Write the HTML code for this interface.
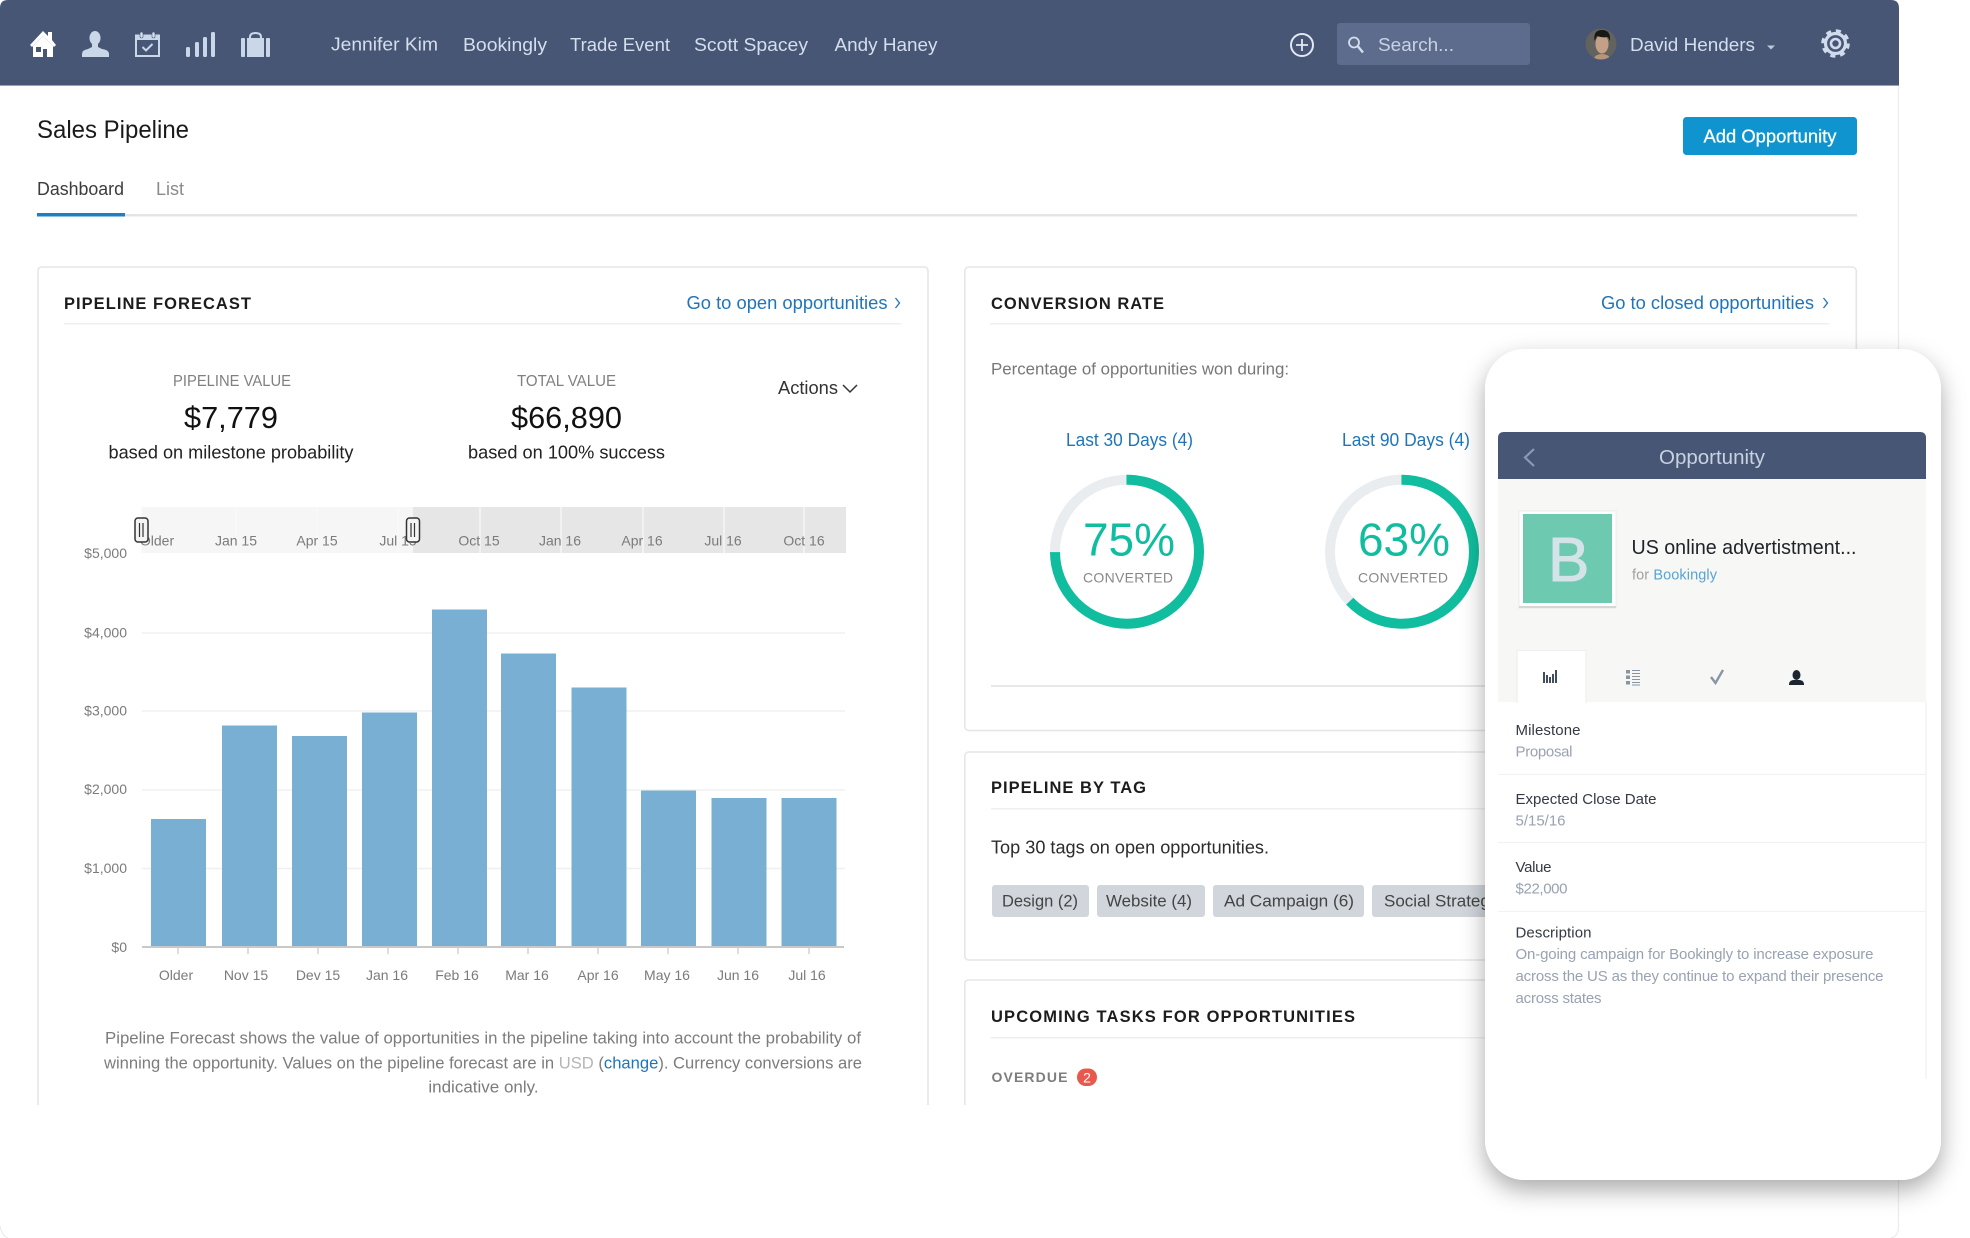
<!DOCTYPE html>
<html lang="en"><head><meta charset="utf-8"><title>Sales Pipeline</title>
<style>
html,body{margin:0;padding:0;background:#fff;width:1970px;height:1238px;overflow:hidden}
svg{display:block;filter:blur(.3px)}
text{font-family:"Liberation Sans",Arial,sans-serif}
.nav{font-size:18px;fill:#d5deec}
.h{font-size:16.500px;font-weight:700;fill:#1c1c1c}
.lnk{font-size:18px;fill:#1f75b9}
.ax{font-size:14px;fill:#7b7b7b}
.rg{font-size:14px;fill:#7b7b7b;text-anchor:middle}
.d{font-size:17px;fill:#7c7c7c}
.lab{font-size:15px;fill:#333a44}
.val{font-size:15px;fill:#98a2b0}
.tag{font-size:17px;fill:#444}
</style></head><body>
<svg width="1970" height="1238" viewBox="0 0 1970 1238" xmlns="http://www.w3.org/2000/svg">
<defs>
<filter id="sh" x="-15%" y="-10%" width="130%" height="125%">
<feDropShadow dx="0" dy="10" stdDeviation="12" flood-color="#000" flood-opacity=".33"/>
</filter>
<clipPath id="av"><circle cx="1601" cy="44" r="15.500"/></clipPath>
</defs>

<!-- page frame -->
<path d="M1898.500 85V1226q0 11-8 12M0 1226q2 10 8 12" fill="none" stroke="#ececec" stroke-width="1.200"/>

<!-- top bar -->
<path d="M8 0H1891q8 0 8 8V85H0V8q0-8 8-8Z" fill="#475675"/>
<rect x="0" y="85" width="1899" height="1" fill="#98a3bb"/>

<!-- home -->
<path d="M30 45 43 31l5 5v-4h4v8l4 5-2 2-11-11-11 11Z" fill="#fff"/>
<path d="M33 46 43 36l10 10v11H47V49h-4v8H33Zm3 1v5h5v-5Z" fill="#fff" fill-rule="evenodd"/>
<!-- person -->
<ellipse cx="95" cy="38" rx="5.500" ry="7" fill="#c9d7e9"/>
<path d="M82 57v-3q0-4 6-5l4-2v-3h6v3l4 2q7 1 7 5v3Z" fill="#c9d7e9"/>
<!-- calendar -->
<rect x="136" y="35.500" width="23" height="20.500" fill="none" stroke="#c9d7e9" stroke-width="2"/>
<rect x="136" y="35" width="23" height="5" fill="#c9d7e9"/>
<rect x="140" y="32" width="3" height="6" rx="1.500" fill="#d8e2f0" stroke="#475675" stroke-width=".6"/>
<rect x="152" y="32" width="3" height="6" rx="1.500" fill="#d8e2f0" stroke="#475675" stroke-width=".6"/>
<path d="M142.500 47l3.500 3.500 6.500-6.500" fill="none" stroke="#c9d7e9" stroke-width="2"/>
<!-- bars -->
<g fill="#c9d7e9"><rect x="186" y="47" width="4" height="10" rx="1.500"/><rect x="195" y="42" width="4" height="15" rx="1.500"/><rect x="203" y="37" width="4" height="20" rx="1.500"/><rect x="211" y="32" width="4" height="25" rx="1.500"/></g>
<!-- briefcase -->
<g fill="#c9d7e9"><rect x="241" y="38" width="4" height="19" rx="1"/><rect x="247" y="38" width="17" height="19"/><rect x="266" y="38" width="4" height="19" rx="1"/></g>
<path d="M250 38v-1q0-4 5.500-4t5.500 4v1" fill="none" stroke="#c9d7e9" stroke-width="2"/>

<g class="nav">
<text x="331" y="50.500" textLength="107" lengthAdjust="spacingAndGlyphs">Jennifer Kim</text>
<text x="463" y="51" textLength="84" lengthAdjust="spacingAndGlyphs">Bookingly</text>
<text x="570" y="51" textLength="100" lengthAdjust="spacingAndGlyphs">Trade Event</text>
<text x="694" y="51" textLength="114" lengthAdjust="spacingAndGlyphs">Scott Spacey</text>
<text x="834.500" y="51" textLength="103" lengthAdjust="spacingAndGlyphs">Andy Haney</text>
</g>

<!-- plus -->
<circle cx="1302" cy="45" r="11" fill="none" stroke="#e3e9f2" stroke-width="2"/>
<path d="M1302 39v12M1296 45h12" stroke="#e3e9f2" stroke-width="1.800"/>
<!-- search -->
<rect x="1337" y="23" width="193" height="42" rx="3" fill="#5d6c8d"/>
<circle cx="1354" cy="42.500" r="5" fill="none" stroke="#d5deec" stroke-width="1.800"/>
<path d="M1358 46.500l5 6" stroke="#d5deec" stroke-width="2.400"/>
<text x="1378" y="51" textLength="76" lengthAdjust="spacingAndGlyphs" class="nav" fill-opacity=".9">Search...</text>
<!-- avatar -->
<g clip-path="url(#av)">
<rect x="1585" y="28" width="32" height="32" fill="#62625e"/>
<ellipse cx="1602" cy="44" rx="6.500" ry="9.500" fill="#c4a088"/>
<path d="M1594.500 41q-1.500-11 7.500-11t8 11l-2-4q-6 1-11-1Z" fill="#1a1817"/>
<path d="M1593 60q2-6 9-6t9 6Z" fill="#b89478"/>
</g>
<text x="1630" y="51" textLength="125" lengthAdjust="spacingAndGlyphs" class="nav">David Henders</text>
<path d="M1767 45.500h8l-4 4Z" fill="#bcc7d9"/>
<!-- gear -->
<circle cx="1835.500" cy="43.500" r="10" fill="none" stroke="#d0dcec" stroke-width="3.200"/>
<circle cx="1835.500" cy="43.500" r="12.500" fill="none" stroke="#d0dcec" stroke-width="3.600" stroke-dasharray="5 4.817"/>
<circle cx="1835.500" cy="43.500" r="4.500" fill="none" stroke="#d0dcec" stroke-width="2.600"/>

<!-- page title -->
<text x="37" y="138" font-size="25" fill="#1a1a1a" textLength="152" lengthAdjust="spacingAndGlyphs">Sales Pipeline</text>
<text x="37" y="195" font-size="18" fill="#3c3c3c" textLength="87" lengthAdjust="spacingAndGlyphs">Dashboard</text>
<text x="156" y="195" font-size="18" fill="#8a8a8a" textLength="28" lengthAdjust="spacingAndGlyphs">List</text>
<rect x="37" y="214" width="1820" height="2.500" fill="#e4e4e4"/>
<rect x="37" y="213" width="88" height="3.500" fill="#2080bf"/>
<rect x="1683" y="117" width="174" height="38" rx="3.500" fill="#0f94cf"/>
<text x="1703.500" y="142.500" font-size="18" fill="#fff" textLength="133" lengthAdjust="spacingAndGlyphs" stroke="#fff" stroke-width=".25">Add Opportunity</text>

<!-- LEFT CARD -->
<path d="M38 1105V271q0-4 4-4H924q4 0 4 4V1105" fill="none" stroke="#e6e6e6" stroke-width="1.600"/>
<text x="64" y="309" class="h" textLength="187">PIPELINE FORECAST</text>
<text x="686.500" y="309" class="lnk" textLength="201" lengthAdjust="spacingAndGlyphs">Go to open opportunities</text>
<path d="M895.500 298l4 5-4 5" fill="none" stroke="#1f75b9" stroke-width="1.300"/>
<rect x="64" y="323" width="837" height="1.500" fill="#efefef"/>

<text x="173" y="386" font-size="15.500" fill="#808080" textLength="118" lengthAdjust="spacingAndGlyphs">PIPELINE VALUE</text>
<text x="184" y="428" font-size="31" fill="#111" textLength="94" lengthAdjust="spacingAndGlyphs">$7,779</text>
<text x="108.500" y="458.500" font-size="18" fill="#222" textLength="245" lengthAdjust="spacingAndGlyphs">based on milestone probability</text>
<text x="517" y="386" font-size="15.500" fill="#808080" textLength="99" lengthAdjust="spacingAndGlyphs">TOTAL VALUE</text>
<text x="511" y="428" font-size="31" fill="#111" textLength="111" lengthAdjust="spacingAndGlyphs">$66,890</text>
<text x="468" y="458.500" font-size="18" fill="#222" textLength="197" lengthAdjust="spacingAndGlyphs">based on 100% success</text>
<text x="778" y="394" font-size="18" fill="#333" textLength="60" lengthAdjust="spacingAndGlyphs">Actions</text>
<path d="M843 385l7 7 7-7" fill="none" stroke="#333" stroke-width="1.500"/>

<!-- range -->
<rect x="141.500" y="507" width="272" height="46" fill="#f6f6f6"/>
<rect x="413" y="507" width="433" height="46" fill="#e6e6e6"/>
<path d="M236 507v46M317 507v46M398 507v46" stroke="#fbfbfb" stroke-width="1"/>
<path d="M480 507v46M561 507v46M643 507v46M724 507v46M804 507v46" stroke="#f6f6f6" stroke-width="1.500"/>
<g>
<text x="157" y="545.500" class="rg">Older</text><text x="236" y="545.500" class="rg">Jan 15</text><text x="317" y="545.500" class="rg">Apr 15</text><text x="398" y="545.500" class="rg">Jul 15</text><text x="479" y="545.500" class="rg">Oct 15</text><text x="560" y="545.500" class="rg">Jan 16</text><text x="642" y="545.500" class="rg">Apr 16</text><text x="723" y="545.500" class="rg">Jul 16</text><text x="804" y="545.500" class="rg">Oct 16</text>
</g>
<g fill="#f4f4f4" stroke="#333" stroke-width="1.500">
<rect x="135" y="518" width="13" height="24" rx="3"/><rect x="406.500" y="518" width="13" height="24" rx="3"/>
</g>
<path d="M139.500 523v14M143 523v14M411 523v14M414.500 523v14" stroke="#333" stroke-width="1.200"/>

<!-- grid -->
<path d="M142 633H845M142 711H845M142 790H845M142 868.500H845" stroke="#f0f0f0" stroke-width="1.500"/>
<g class="ax" text-anchor="end">
<text x="127" y="558">$5,000</text><text x="127" y="637.500">$4,000</text><text x="127" y="715.500">$3,000</text><text x="127" y="794">$2,000</text><text x="127" y="873">$1,000</text><text x="127" y="952">$0</text>
</g>
<!-- bars -->
<g fill="#78afd2">
<rect x="151" y="819" width="55" height="128"/><rect x="222" y="725.500" width="55" height="221.500"/><rect x="292" y="736" width="55" height="211"/><rect x="362" y="712.500" width="55" height="234.500"/><rect x="432" y="609.500" width="55" height="337.500"/><rect x="501" y="653.500" width="55" height="293.500"/><rect x="571.500" y="687.500" width="55" height="259.500"/><rect x="641" y="790.500" width="55" height="156.500"/><rect x="711.500" y="798" width="55" height="149"/><rect x="781.500" y="798" width="55" height="149"/>
</g>
<rect x="142" y="946" width="702" height="2" fill="#c8c8c8"/>
<path d="M178 948v6M248 948v6M318 948v6M388 948v6M458 948v6M528 948v6M598 948v6M668 948v6M738 948v6M809 948v6" stroke="#c8c8c8" stroke-width="1.200"/>
<g class="rg">
<text x="176" y="980">Older</text><text x="246" y="980">Nov 15</text><text x="318" y="980">Dev 15</text><text x="387" y="980">Jan 16</text><text x="457" y="980">Feb 16</text><text x="527" y="980">Mar 16</text><text x="598" y="980">Apr 16</text><text x="667" y="980">May 16</text><text x="738" y="980">Jun 16</text><text x="807" y="980">Jul 16</text>
</g>
<text x="105" y="1043.500" class="d" textLength="756" lengthAdjust="spacingAndGlyphs">Pipeline Forecast shows the value of opportunities in the pipeline taking into account the probability of</text>
<text x="104" y="1068.500" class="d" textLength="758" lengthAdjust="spacingAndGlyphs">winning the opportunity. Values on the pipeline forecast are in <tspan fill="#b5b5b5">USD</tspan> (<tspan fill="#1f75b9">change</tspan>). Currency conversions are</text>
<text x="483.500" y="1092.500" class="d" text-anchor="middle">indicative only.</text>

<!-- RIGHT CARD 1 -->
<rect x="964.800" y="267" width="891.500" height="463.500" rx="4" fill="none" stroke="#e6e6e6" stroke-width="1.600"/>
<text x="991" y="309" class="h" textLength="173">CONVERSION RATE</text>
<text x="1601" y="309" class="lnk" textLength="213" lengthAdjust="spacingAndGlyphs">Go to closed opportunities</text>
<path d="M1823.500 298l4 5-4 5" fill="none" stroke="#1f75b9" stroke-width="1.300"/>
<rect x="990" y="323" width="839" height="1.500" fill="#efefef"/>
<text x="991" y="374.500" font-size="17" fill="#777" textLength="298" lengthAdjust="spacingAndGlyphs">Percentage of opportunities won during:</text>
<text x="1066" y="446" font-size="18" fill="#1f75b9" textLength="127" lengthAdjust="spacingAndGlyphs">Last 30 Days (4)</text>
<text x="1342" y="446" font-size="18" fill="#1f75b9" textLength="128" lengthAdjust="spacingAndGlyphs">Last 90 Days (4)</text>

<circle cx="1127" cy="551.700" r="72" fill="none" stroke="#e9edf0" stroke-width="10"/>
<circle cx="1127" cy="551.700" r="72" fill="none" stroke="#10bd9e" stroke-width="10" pathLength="100" stroke-dasharray="75 25" transform="rotate(-90 1127 551.700)"/>
<text x="1083" y="555.500" font-size="46" fill="#10bd9e" textLength="92" lengthAdjust="spacingAndGlyphs">75%</text>
<text x="1083" y="582.500" font-size="14" fill="#888" textLength="90">CONVERTED</text>
<circle cx="1402" cy="551.700" r="72" fill="none" stroke="#e9edf0" stroke-width="10"/>
<circle cx="1402" cy="551.700" r="72" fill="none" stroke="#10bd9e" stroke-width="10" pathLength="100" stroke-dasharray="63 37" transform="rotate(-90 1402 551.700)"/>
<text x="1358" y="555.500" font-size="46" fill="#10bd9e" textLength="92" lengthAdjust="spacingAndGlyphs">63%</text>
<text x="1358" y="582.500" font-size="14" fill="#888" textLength="90">CONVERTED</text>
<rect x="991" y="685" width="840" height="2" fill="#e8e8e8"/>

<!-- RIGHT CARD 2 -->
<rect x="964.800" y="752" width="891.500" height="208" rx="4" fill="none" stroke="#e6e6e6" stroke-width="1.600"/>
<text x="991" y="793" class="h" textLength="155">PIPELINE BY TAG</text>
<rect x="991" y="808" width="838" height="1.500" fill="#efefef"/>
<text x="991" y="853.500" font-size="18" fill="#2c2c2c" textLength="278" lengthAdjust="spacingAndGlyphs">Top 30 tags on open opportunities.</text>
<g fill="#d0d6dc">
<rect x="992" y="885" width="97" height="32" rx="3"/><rect x="1097" y="885" width="108" height="32" rx="3"/><rect x="1213" y="885" width="151" height="32" rx="3"/><rect x="1372" y="885" width="170" height="32" rx="3"/>
</g>
<text x="1002" y="906.500" class="tag" textLength="76" lengthAdjust="spacingAndGlyphs">Design (2)</text>
<text x="1106" y="906.500" class="tag" textLength="86" lengthAdjust="spacingAndGlyphs">Website (4)</text>
<text x="1224" y="906.500" class="tag" textLength="130" lengthAdjust="spacingAndGlyphs">Ad Campaign (6)</text>
<text x="1384" y="906.500" class="tag">Social Strategy (3)</text>

<!-- RIGHT CARD 3 -->
<path d="M964.800 1105V984q0-4 4-4H1852q4 0 4 4V1105" fill="none" stroke="#e6e6e6" stroke-width="1.600"/>
<text x="991" y="1022" class="h" textLength="364">UPCOMING TASKS FOR OPPORTUNITIES</text>
<rect x="991" y="1037" width="838" height="1.500" fill="#efefef"/>
<text x="991.500" y="1082" font-size="14" font-weight="700" fill="#7d7d7d" textLength="76">OVERDUE</text>
<rect x="1077" y="1068.500" width="20" height="17.500" rx="8.700" fill="#e8594d"/>
<text x="1087" y="1082.500" font-size="14" fill="#fff" text-anchor="middle">2</text>

<!-- PHONE -->
<rect x="1485" y="349" width="456" height="831" rx="40" fill="#fff" filter="url(#sh)"/>
<rect x="1498" y="479" width="428" height="223" fill="#f7f7f6"/>
<path d="M1498 479V438q0-6 6-6H1920q6 0 6 6V479Z" fill="#475675"/>
<path d="M1534 449l-9 8.500 9 8.500" fill="none" stroke="#8b9ab3" stroke-width="2.200"/>
<text x="1659" y="464" font-size="20" fill="#c9d2e0" textLength="106" lengthAdjust="spacingAndGlyphs">Opportunity</text>

<rect x="1519" y="511" width="97" height="97" fill="#fff" stroke="#e2e2e2" stroke-width=".6"/>
<rect x="1519" y="606" width="97" height="2" fill="#d6d6d6"/>
<rect x="1523" y="514" width="89" height="89" fill="#6dc9b0"/>
<text x="1548" y="581" font-size="62" fill="#d3e3e8" stroke="#d3e3e8" stroke-width="1">B</text>
<text x="1631.500" y="554" font-size="20" fill="#1f2328" textLength="225" lengthAdjust="spacingAndGlyphs">US online advertistment...</text>
<text x="1632" y="579.500" font-size="14.500" fill="#a0a0a0" textLength="85">for <tspan fill="#5aa3d4">Bookingly</tspan></text>

<rect x="1517" y="650" width="69" height="53" fill="#fff"/>
<rect x="1517" y="650" width="69" height="1" fill="#eee"/>
<path d="M1517 650v53M1586 650v53" stroke="#ececec" stroke-width="1"/>
<!-- tab icons -->
<path d="M1544 672v11M1547 675v8M1550 677v6M1553 674v9M1556 670v13" stroke="#2e3a4d" stroke-width="1.800"/>
<g fill="#8a95a3">
<rect x="1626" y="670" width="4" height="3.500"/><rect x="1626" y="675.500" width="4" height="3.500"/><rect x="1626" y="681" width="4" height="3.500"/>
<path d="M1632 670h8v1h-8ZM1632 673h8v1h-8ZM1632 676h8v1h-8ZM1632 679h8v1h-8ZM1632 682h8v1h-8ZM1632 684.500h8v1h-8Z"/>
</g>
<path d="M1711 677l4.500 6 7.500-13" fill="none" stroke="#8a95a3" stroke-width="2.400"/>
<ellipse cx="1796.500" cy="675" rx="4" ry="5" fill="#1c2530"/>
<path d="M1789 685v-1q0-3 4-4h7q4 1 4 4v1Z" fill="#1c2530"/>

<!-- details -->
<path d="M1926 702V1079" stroke="#f0f0f0" stroke-width="1.200"/>
<path d="M1498 774.500H1926M1498 842.500H1926M1498 911.500H1926" stroke="#f2f2f2" stroke-width="1.200"/>
<text x="1515.500" y="735" class="lab" textLength="65">Milestone</text>
<text x="1515.500" y="756.500" class="val" textLength="57">Proposal</text>
<text x="1515.500" y="804" class="lab" textLength="141">Expected Close Date</text>
<text x="1515.500" y="825.500" class="val" textLength="50">5/15/16</text>
<text x="1515.500" y="872" class="lab" textLength="36">Value</text>
<text x="1515.500" y="893.500" class="val" textLength="52">$22,000</text>
<text x="1515.500" y="937.500" class="lab" textLength="76">Description</text>
<text x="1515.500" y="959" class="val" textLength="358">On-going campaign for Bookingly to increase exposure</text>
<text x="1515.500" y="981" class="val" textLength="368">across the US as they continue to expand their presence</text>
<text x="1515.500" y="1003" class="val" textLength="86">across states</text>
</svg>
</body></html>
